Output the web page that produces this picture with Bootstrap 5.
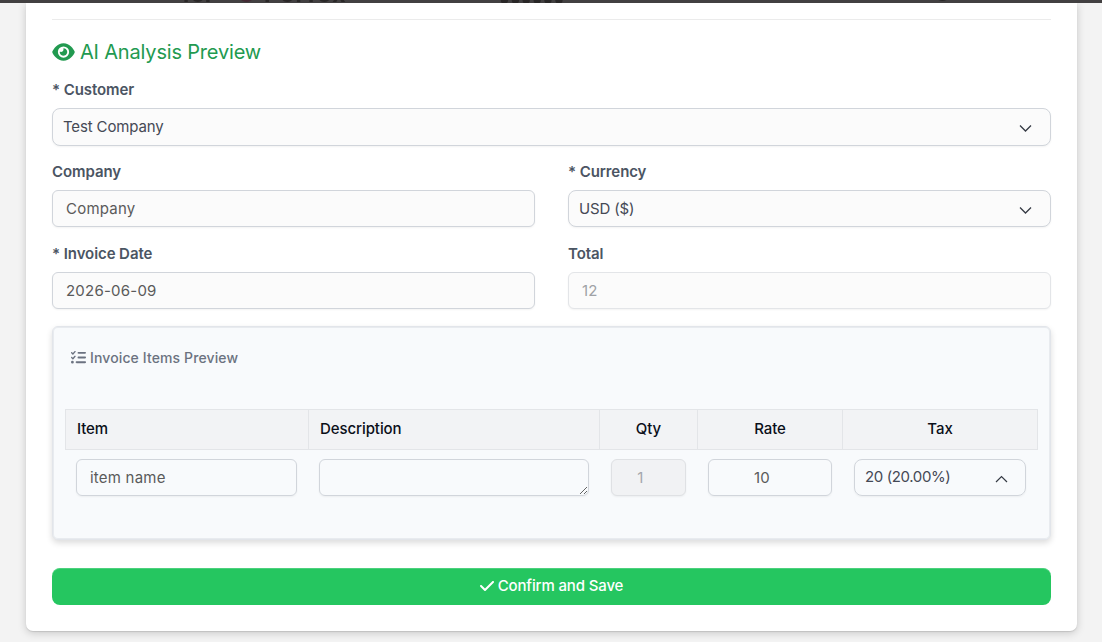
<!DOCTYPE html>
<html lang="en">
<head>
<meta charset="utf-8">
<meta name="viewport" content="width=device-width, initial-scale=1">
<title>AI Analysis Preview</title>
<link href="https://cdn.jsdelivr.net/npm/bootstrap@5.3.0/dist/css/bootstrap.min.css" rel="stylesheet">
<style>
body{background:#f3f3f3;font-family:Inter,"Liberation Sans",sans-serif;font-size:15px;color:#475569;height:642px}
.topbar{height:3px;background:#424041}
.topbar span{position:absolute;top:-17px;line-height:22px;font-size:23px;font-weight:700;color:#292727;filter:blur(.5px)}
.sheet{margin:0 25px 0 26px;height:628px;padding:16px 26px 0;background:#fff;border-radius:0 0 7px 7px;box-shadow:0 1px 1px rgba(0,0,0,.1),0 2px 8px rgba(0,0,0,.18)}
.rule{height:1px;background:#ebebeb}
.heading{height:58px;font-size:20px;color:#229a50;padding-top:5px;letter-spacing:-.18px}
.heading svg{width:23px;height:20px;margin-right:5px}
.form-label{display:block;height:30px;line-height:24px;margin:0;font-weight:600;color:#4b5563;letter-spacing:-.08px}
.form-control,.pick{height:37px;border:1px solid #d1d5db;border-radius:6px;background:#fbfbfb;font-size:15px;line-height:20px;box-shadow:0 1px 2px rgba(0,0,0,.05)}
.form-control{padding:7px 13px;color:#5a5a5a;letter-spacing:.22px}
.form-control:disabled{background:#fbfbfb;color:#9fa2a6;border-color:#e3e5e8}
.pick{padding:0 18px 0 10px;border-radius:8px;color:#454955;letter-spacing:-.14px}
.pick.tall{height:38px}
.pairs{display:grid;grid-template-columns:1fr 1fr;column-gap:33px;row-gap:15px;margin-top:14px}
.panel{margin-top:17px;height:214px;border:1px solid #e2e5ea;border-radius:6px;background:#f8fafc;padding:0 12px;box-shadow:inset 0 0 0 1px #e8ebef,0 3px 6px rgba(0,0,0,.14)}
.panel-title{height:82px;padding:21px 0 0 6px;font-size:14px;line-height:20px;font-weight:500;color:#6b7280;letter-spacing:.12px}
.panel-title svg{width:15px;height:15px;margin:2px 4px 0 0}
.items{table-layout:fixed;width:973px;border-collapse:separate;border-spacing:0}
.items th{height:41px;background:#f2f3f5;border:solid #e3e5e8;border-width:1px 0 1px 1px;font-weight:500;color:#0b0f19;padding:0 11px 1px;line-height:20px;letter-spacing:-.08px}
.items th:last-child{border-right-width:1px}
.items td{padding:9px 11px 0 11px;vertical-align:top}
.items td:nth-child(2){padding-right:10px}
.items td:nth-child(3){padding-left:12px}
.items td:nth-child(4){padding-right:10px}
.items td:last-child{padding:9px 12px 0 12px}
.items .form-control,.items .pick{background:transparent}
.items .form-control:disabled{background:#f1f2f4;border-color:#dfe1e4;color:#a4a7ac}
.items .pick{padding-right:17px;letter-spacing:-.38px}
.items .pick span{padding-bottom:2px}
.items .pick svg{margin-top:2px}
.items textarea{display:block;min-height:37px}
.items .num{text-align:center;padding-right:29px}
.confirm{height:37px;margin-top:28px;background:#25c660;border:0;border-top:1px solid #4bd17d;border-radius:8px;color:#fff;font-size:15px;font-weight:500;letter-spacing:-.14px;padding:0 0 2px}
.confirm svg{width:14px;height:16px;margin-right:4px}
</style>
<script src="https://cdn.jsdelivr.net/npm/bootstrap@5.3.0/dist/js/bootstrap.bundle.min.js"></script>
</head>
<body class="overflow-hidden">
<header class="topbar position-relative overflow-hidden">
  <span style="left:182px">for</span><span style="left:236px;color:#442a34">●</span><span style="left:264px;letter-spacing:1.6px">Perfex</span><span style="left:499px;top:-12px">••••••</span><span style="left:932px;top:-18px">●</span>
</header>
<main class="sheet">
  <div class="rule"></div>
  <h1 class="heading d-flex align-items-center fw-normal m-0">
    <svg viewBox="0 0 576 512" fill="currentColor"><path d="M288 32c-80.8 0-145.5 36.8-192.6 80.6C48.6 156 17.3 208 2.5 243.7c-3.3 7.9-3.3 16.7 0 24.6C17.3 304 48.6 356 95.4 399.4C142.5 443.2 207.2 480 288 480s145.5-36.8 192.6-80.6c46.8-43.5 78.1-95.4 93-131.1c3.3-7.9 3.3-16.7 0-24.6c-14.9-35.7-46.2-87.7-93-131.1C433.5 68.8 368.8 32 288 32zM144 256a144 144 0 1 1 288 0 144 144 0 1 1 -288 0zm144-64c0 35.3-28.7 64-64 64c-7.1 0-13.9-1.2-20.3-3.3c-5.5-1.8-11.9 1.6-11.7 7.4c.3 6.9 1.3 13.8 3.2 20.7c13.7 51.2 66.4 81.6 117.6 67.9s81.6-66.4 67.9-117.6c-11.1-41.5-47.8-69.4-88.6-71.1c-5.8-.2-9.2 6.1-7.4 11.7c2.1 6.4 3.3 13.2 3.3 20.3z"/></svg>
    <span>AI Analysis Preview</span>
  </h1>
  <label class="form-label">* Customer</label>
  <div class="pick tall d-flex align-items-center justify-content-between"><span>Test Company</span>
    <svg class="mt-1" width="13" height="8" viewBox="0 0 13 8" fill="none" stroke="#353a44" stroke-width="1.3"><path d="M1 .5L6.5 6 12 .5"/></svg></div>
  <div class="pairs">
    <div><label class="form-label" for="company">Company</label><input id="company" class="form-control" value="Company"></div>
    <div><label class="form-label">* Currency</label>
      <div class="pick d-flex align-items-center justify-content-between"><span>USD ($)</span>
        <svg class="mt-1" width="13" height="8" viewBox="0 0 13 8" fill="none" stroke="#353a44" stroke-width="1.3"><path d="M1 .5L6.5 6 12 .5"/></svg></div></div>
    <div><label class="form-label" for="date">* Invoice Date</label><input id="date" class="form-control" value="2026-06-09"></div>
    <div><label class="form-label" for="total">Total</label><input id="total" class="form-control" value="12" disabled></div>
  </div>
  <section class="panel">
    <div class="panel-title d-flex align-items-start"><svg viewBox="0 0 512 512" fill="currentColor"><path d="M152.1 38.2c9.9 8.9 10.7 24 1.8 33.9l-72 80c-4.4 4.9-10.6 7.8-17.2 7.9s-12.9-2.4-17.6-7L7 113C-2.3 103.6-2.3 88.4 7 79s24.6-9.4 33.9 0l22.1 22.1 55.1-61.2c8.9-9.9 24-10.7 33.9-1.8zm0 160c9.9 8.9 10.7 24 1.8 33.9l-72 80c-4.4 4.9-10.6 7.8-17.2 7.9s-12.9-2.4-17.6-7L7 273c-9.4-9.4-9.4-24.6 0-33.9s24.6-9.4 33.9 0l22.1 22.1 55.1-61.2c8.9-9.9 24-10.7 33.9-1.8zM224 96c0-17.7 14.3-32 32-32H480c17.7 0 32 14.3 32 32s-14.3 32-32 32H256c-17.7 0-32-14.3-32-32zm0 160c0-17.7 14.3-32 32-32H480c17.7 0 32 14.3 32 32s-14.3 32-32 32H256c-17.7 0-32-14.3-32-32zM160 416c0-17.7 14.3-32 32-32H480c17.7 0 32 14.3 32 32s-14.3 32-32 32H192c-17.7 0-32-14.3-32-32zM48 368a48 48 0 1 1 0 96 48 48 0 1 1 0-96z"/></svg><span>Invoice Items Preview</span></div>
    <table class="items">
      <colgroup><col width="243"><col width="291"><col width="98"><col width="145"><col width="196"></colgroup>
      <thead><tr><th>Item</th><th>Description</th><th class="text-center">Qty</th><th class="text-center">Rate</th><th class="text-center">Tax</th></tr></thead>
      <tbody><tr>
        <td><input class="form-control" value="item name"></td>
        <td><textarea class="form-control" rows="1"></textarea></td>
        <td><input class="form-control num" value="1" disabled></td>
        <td><input class="form-control num" value="10"></td>
        <td><div class="pick d-flex align-items-center justify-content-between"><span>20 (20.00%)</span>
          <svg width="13" height="8" viewBox="0 0 13 8" fill="none" stroke="#353a44" stroke-width="1.2"><path d="M1 7l5.5-5.5L12 7"/></svg></div></td>
      </tr></tbody>
    </table>
  </section>
  <button class="confirm btn w-100 d-flex align-items-center justify-content-center" type="button">
    <svg viewBox="0 0 448 512" fill="currentColor"><path d="M438.6 105.4c12.5 12.5 12.5 32.8 0 45.3l-256 256c-12.5 12.5-32.8 12.5-45.3 0l-128-128c-12.5-12.5-12.5-32.8 0-45.3s32.8-12.5 45.3 0L160 338.7 393.4 105.4c12.5-12.5 32.8-12.5 45.3 0z"/></svg>
    <span>Confirm and Save</span>
  </button>
</main>
</body>
</html>
